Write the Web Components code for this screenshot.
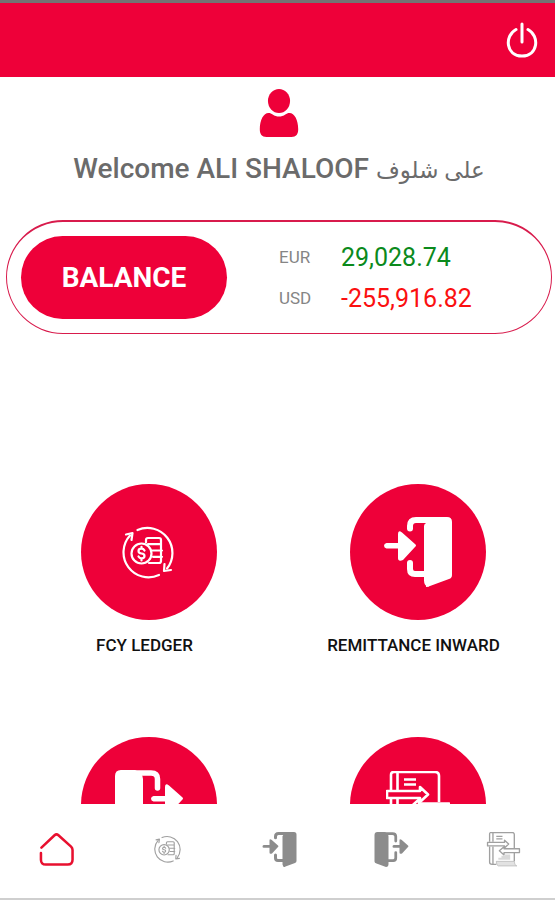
<!DOCTYPE html>
<html lang="en">
<head>
<meta charset="utf-8">
<meta name="viewport" content="width=device-width, initial-scale=1">
<title>Accounts</title>
<style>
  :root {
    --brand: #ee0039;
    --muted: #6b6b6b;
    --nav: #8c8c8c;
    --nav-light: #a0a0a0;
  }
  html, body { height: 100%; }
  body {
    margin: 0;
    background: #fff;
    font-family: Roboto, "Noto Sans", "DejaVu Sans", sans-serif;
  }
</style>
</head>
<body>
<bank-app>
  <app-header slot="header"></app-header>
  <user-greeting>Welcome ALI SHALOOF <span lang="ar">على شلوف</span></user-greeting>
  <balance-card label="BALANCE">
    <balance-row currency="EUR" tone="credit">29,028.74</balance-row>
    <balance-row currency="USD" tone="debit">-255,916.82</balance-row>
  </balance-card>
  <tile-grid>
    <action-tile icon="ledger">FCY LEDGER</action-tile>
    <action-tile icon="inward">REMITTANCE INWARD</action-tile>
    <action-tile icon="outward" label="Remittance outward"></action-tile>
    <action-tile icon="transfer" label="Transfer"></action-tile>
  </tile-grid>
  <bottom-nav slot="footer">
    <nav-item icon="home" label="Home" active></nav-item>
    <nav-item icon="ledger" label="FCY ledger"></nav-item>
    <nav-item icon="inward" label="Remittance inward"></nav-item>
    <nav-item icon="outward" label="Remittance outward"></nav-item>
    <nav-item icon="transfer" label="Transfer"></nav-item>
  </bottom-nav>
</bank-app>

<script>
/* ------------------------------------------------------------ */
/* Icons                                                        */
/* ------------------------------------------------------------ */

const ICONS = {
  power: {
    box: '0 0 32 36',
    body: `<g fill="none" stroke="currentColor" stroke-width="3" stroke-linecap="round">
      <path d="M10 7.500C-2 14 0 34 16 34S34 14 22 7.500"/><path d="M16 2v18"/></g>`
  },
  user: {
    box: '0 0 40 50',
    body: `<g fill="currentColor"><ellipse cx="20" cy="12.500" rx="11.500" ry="12.500"/>
      <path d="M9 25c2 0 3 .6 4.400 1.600C17.500 29.500 22.500 29.500 26.600 26.600 28 25.600 29 25 31 25c5 0 9 7 9 17 0 5-2 8-7 8H7c-5 0-7-3-7-8C0 32 4 25 9 25z"/></g>`
  },
  home: {
    box: '0 0 36 35',
    body: `<path d="M2.500 15.500 16 2.800q2-1.800 4 0L33 14.500q1.500 1.500 1.500 3.500V28q0 5-5 5H7q-5 0-5-5v-7" fill="none" stroke="currentColor" stroke-width="2.600" stroke-linecap="round" stroke-linejoin="round"/>`
  },
  ledger: {
    box: '12 10 54 54',
    body: `<g fill="none" stroke="currentColor" stroke-width="2.200" stroke-linecap="round" stroke-linejoin="round">
      <path d="M27.500 15A25 25 0 0 1 57 53.500"/>
      <path d="M49 60A25 25 0 0 1 20 20.500"/>
      <path d="M16 19.500 22.500 18 21.500 25"/>
      <path d="M54.500 49 54 56 61 55"/>
      <circle cx="31.500" cy="38.500" r="10"/>
      <path d="M34.500 35.500q-1-1.800-3-1.800-3 0-3 2.300t3 2.500 3 2.500-3 2.300q-2 0-3-1.800M31.500 31.800v1.900M31.500 43.300v2.200"/>
      <path d="M36 27.500v-2.500q0-2 2-2H49q2 0 2 2v21q0 2-2 2H39M38 29.200H51M42.500 35.500H52M43 41.800H52"/></g>`
  },
  inward: {
    box: '0 0 68 70',
    body: `<g fill="currentColor">
      <path d="M42 5V70q0 0 0 0 2 0 4-1L65 62q3-1 3-4V5q0-5-5-5H43z"/>
      <path d="M40.500 7.500Q41 6 45 5V69.500q-5 0-5-6V9z"/>
      <path d="M2.500 26H14V17q0-4.500 4-1.500L31 27q2 1.500 0 3L19 43q-5 2-5-2V31.500H2.500Q0 31 0 28.800 0 26.500 2.500 26z"/></g>
      <path d="M26 11.500V9q0-6 6-6H60M26 46v6q0 5 5 5H42" fill="none" stroke="currentColor" stroke-width="6" stroke-linecap="round"/>`
  },
  outward: {
    box: '0 0 68 70',
    body: `<g fill="currentColor">
      <path d="M0 6Q0 0 6 0h14q8 3 8 9v55q0 6-5 6L4 63q-4-1-4-4z"/>
      <path d="M38.500 26H50V17q0-4.500 4-1.500L67 27q2 1.500 0 3L55 43q-5 2-5-2V31.500H38.500Q36 31 36 28.800 36 26.500 38.500 26z"/></g>
      <path d="M7 3H36q6.500 0 6.500 6v9M42.500 41v11q0 5-5 5H26" fill="none" stroke="currentColor" stroke-width="5.500" stroke-linecap="round"/>`
  },
  transfer: {
    box: '0 0 64 68',
    body: `<g fill="none" stroke="currentColor" stroke-width="2.600" stroke-linejoin="round">
      <path d="M5 19V4q0-3 3-3H49q4 0 4 4V31M5 28V59q0 4 5 4h8M11.500 1V19M11.500 28V62M53 41V57"/>
      <path d="M18 8.500H30M18 13.500H30"/>
      <path d="M1 20H34V16L42 23.500 34 31V27H1z"/>
      <path d="M63 32.500H33V28.500L24 36.500 33 44.500V40H63z"/>
      <path d="M22 54V50h6V46h7V43.500h10V54z" fill="currentColor" fill-opacity=".4" stroke="none"/>
      <path d="M18 57H53q0 8 5 9H22q-4-1-4-9z" fill="currentColor" fill-opacity=".3" stroke-width="1"/></g>`
  }
};

/* Attaches an open shadow root and fills it once. */
class BaseElement extends HTMLElement {
  connectedCallback() {
    if (this.shadowRoot) return;
    this.attachShadow({ mode: 'open' });
    this.shadowRoot.innerHTML = this.render();
  }

  attr(name) {
    return this.getAttribute(name) || '';
  }
}

class AppIcon extends BaseElement {
  render() {
    const icon = ICONS[this.attr('name')];
    return `
      <style>
        :host { display: block; }
        svg { display: block; width: 100%; height: 100%; }
      </style>
      <svg viewBox="${icon.box}" aria-hidden="true">${icon.body}</svg>
    `;
  }
}

/* ------------------------------------------------------------ */
/* Shell                                                        */
/* ------------------------------------------------------------ */

class BankApp extends BaseElement {
  render() {
    return `
      <style>
        :host { display: flex; flex-direction: column; height: 100vh; }
        main {
          flex: 1;
          min-height: 0;
          overflow-y: auto;
          scrollbar-width: none;
          padding: 12px 3px 0 6px;
        }
      </style>
      <slot name="header"></slot>
      <main><slot></slot></main>
      <slot name="footer"></slot>
    `;
  }
}

class AppHeader extends BaseElement {
  render() {
    return `
      <style>
        :host { display: block; border-top: 3px solid #737373; background: var(--brand); }
        header {
          display: flex;
          justify-content: flex-end;
          align-items: center;
          height: 74px;
          padding: 0 17px;
        }
        button { padding: 0; border: 0; background: none; color: #fff; cursor: pointer; }
        app-icon { width: 32px; height: 36px; }
      </style>
      <header>
        <button type="button" aria-label="Log out"><app-icon name="power"></app-icon></button>
      </header>
    `;
  }
}

class UserGreeting extends BaseElement {
  render() {
    return `
      <style>
        :host { display: flex; flex-direction: column; align-items: center; gap: 16px; }
        app-icon { width: 40px; height: 48px; color: var(--brand); }
        h1 {
          margin: 0;
          font-size: 28px;
          line-height: 32px;
          font-weight: 500;
          color: var(--muted);
          white-space: nowrap;
        }
        ::slotted([lang="ar"]) { font-size: 23px; line-height: 1; }
      </style>
      <app-icon name="user"></app-icon>
      <h1><slot></slot></h1>
    `;
  }
}

/* ------------------------------------------------------------ */
/* Balance                                                      */
/* ------------------------------------------------------------ */

class BalanceCard extends BaseElement {
  render() {
    return `
      <style>
        :host {
          display: flex;
          align-items: center;
          gap: 52px;
          margin-top: 35px;
          padding: 14px;
          border: 1px solid #d81b4c;
          border-top-width: 2px;
          border-radius: 57px;
        }
        button {
          width: 206px;
          height: 83px;
          padding: 0;
          border: 0;
          border-radius: 42px;
          background: var(--brand);
          color: #fff;
          font: 700 28px/32px Roboto, sans-serif;
          cursor: pointer;
        }
        .rows { display: grid; gap: 7px; }
      </style>
      <button type="button">${this.attr('label')}</button>
      <div class="rows"><slot></slot></div>
    `;
  }
}

class BalanceRow extends BaseElement {
  render() {
    return `
      <style>
        :host { display: block; }
        dl {
          display: grid;
          grid-template-columns: 62px auto;
          align-items: center;
          margin: 0;
          line-height: 32px;
        }
        dt { font-size: 17px; color: #858585; }
        dd { margin: 0; padding-top: 2px; font-size: 25px; color: #0b8a1c; }
        :host([tone="debit"]) dd { color: #fb1010; }
      </style>
      <dl><dt>${this.attr('currency')}</dt><dd><slot></slot></dd></dl>
    `;
  }
}

/* ------------------------------------------------------------ */
/* Tiles                                                        */
/* ------------------------------------------------------------ */

class TileGrid extends BaseElement {
  render() {
    return `
      <style>
        :host {
          display: grid;
          grid-template-columns: 1fr 1fr;
          row-gap: 82px;
          margin-top: 150px;
          padding: 0 4px;
        }
      </style>
      <slot></slot>
    `;
  }
}

class ActionTile extends BaseElement {
  render() {
    const icon = this.attr('icon');
    const label = this.attr('label');
    return `
      <style>
        :host { display: block; }
        button {
          display: flex;
          flex-direction: column;
          align-items: center;
          gap: 15px;
          width: 100%;
          padding: 0;
          border: 0;
          background: none;
          color: #111;
          font: 500 17px/20px Roboto, sans-serif;
          cursor: pointer;
        }
        .disc {
          display: grid;
          place-items: center;
          width: 136px;
          height: 136px;
          margin-left: 9px;
          border-radius: 50%;
          background: var(--brand);
          color: #fff;
        }
        app-icon { width: 68px; height: 70px; }
        app-icon[name="ledger"] { width: 54px; height: 54px; }
        app-icon[name="transfer"] { width: 64px; height: 68px; }
      </style>
      <button type="button"${label ? ` aria-label="${label}"` : ''}>
        <span class="disc"><app-icon name="${icon}"></app-icon></span>
        <span><slot></slot></span>
      </button>
    `;
  }
}

/* ------------------------------------------------------------ */
/* Bottom navigation                                            */
/* ------------------------------------------------------------ */

class BottomNav extends BaseElement {
  render() {
    return `
      <style>
        :host { display: block; border-bottom: 2px solid #cfcfcf; background: #fff; }
        nav { display: flex; justify-content: space-between; padding: 0 34px 4px 38px; }
      </style>
      <nav aria-label="Main"><slot></slot></nav>
    `;
  }
}

class NavItem extends BaseElement {
  render() {
    return `
      <style>
        :host { display: block; width: 36px; color: var(--nav); }
        :host([icon="ledger"]), :host([icon="transfer"]) { color: var(--nav-light); }
        :host([active]) { color: #e8102f; }
        a {
          display: grid;
          place-items: center;
          height: 90px;
          color: inherit;
        }
        app-icon { width: 35px; height: 35px; }
        app-icon[name="ledger"] { width: 28px; height: 28px; }
      </style>
      <a href="#${this.attr('icon')}" aria-label="${this.attr('label')}">
        <app-icon name="${this.attr('icon')}"></app-icon>
      </a>
    `;
  }
}

customElements.define('app-icon', AppIcon);
customElements.define('bank-app', BankApp);
customElements.define('app-header', AppHeader);
customElements.define('user-greeting', UserGreeting);
customElements.define('balance-card', BalanceCard);
customElements.define('balance-row', BalanceRow);
customElements.define('tile-grid', TileGrid);
customElements.define('action-tile', ActionTile);
customElements.define('bottom-nav', BottomNav);
customElements.define('nav-item', NavItem);
</script>
</body>
</html>
